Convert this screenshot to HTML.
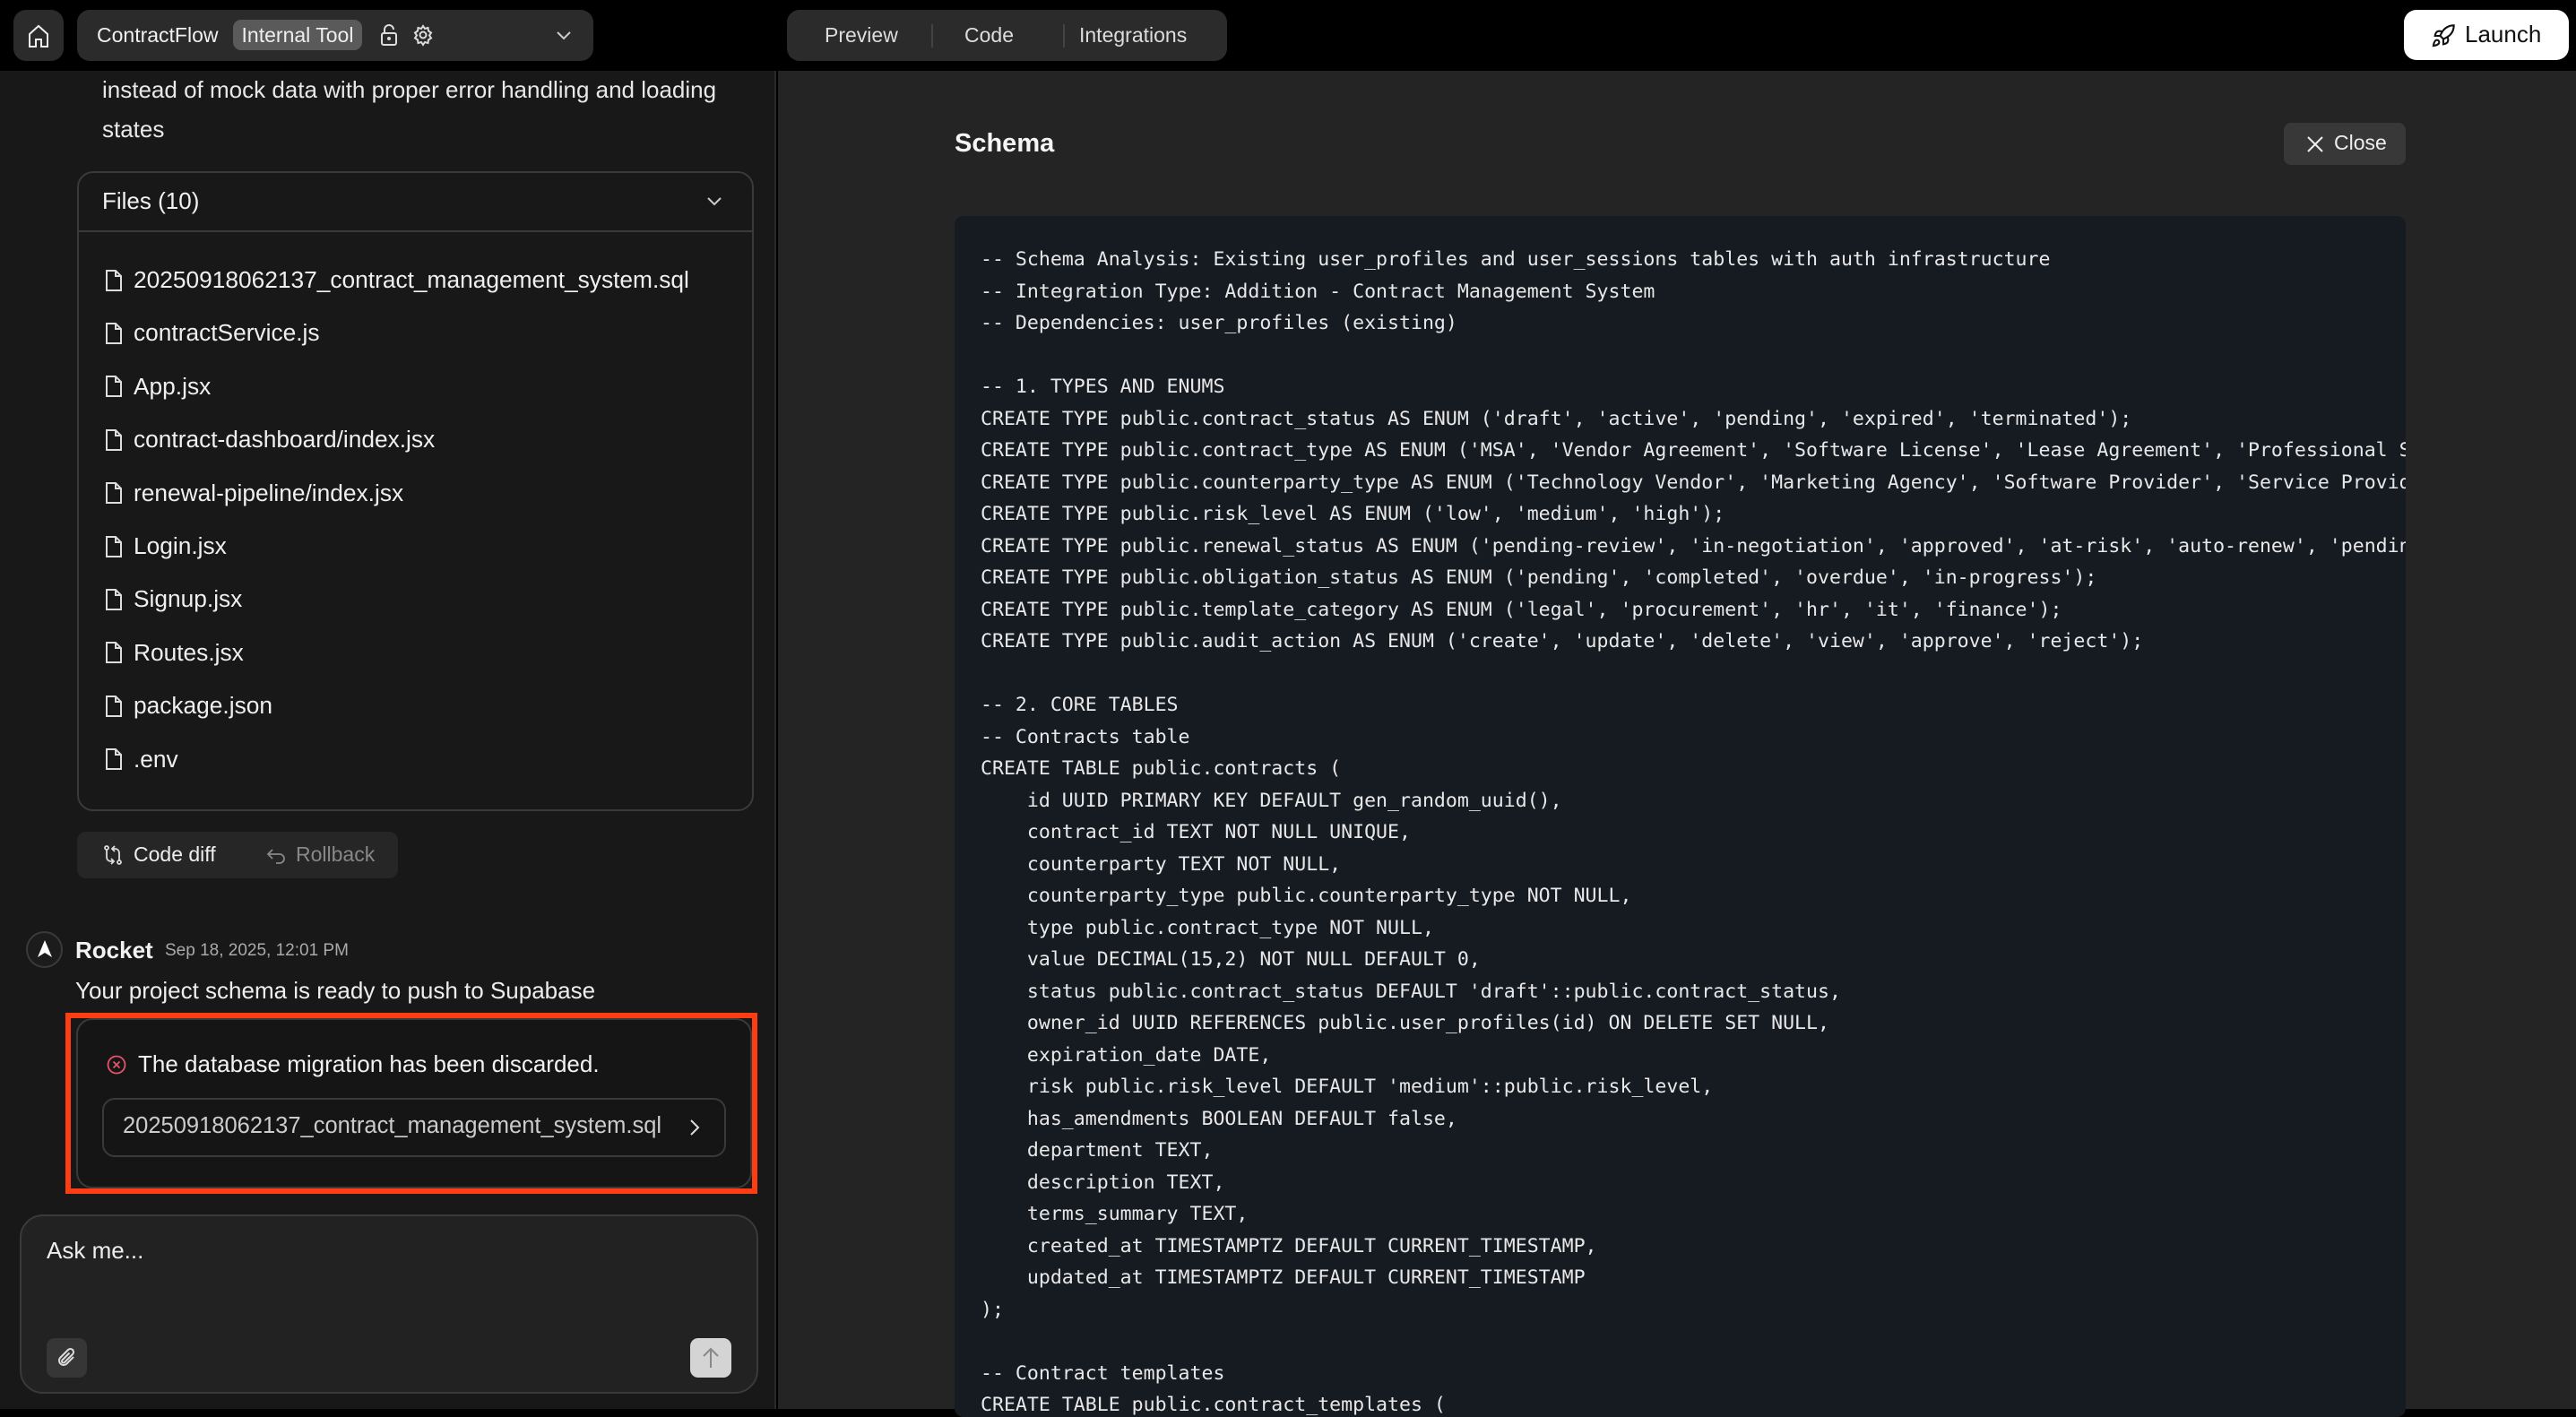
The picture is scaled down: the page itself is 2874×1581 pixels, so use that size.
<!DOCTYPE html>
<html><head><meta charset="utf-8"><style>
*{box-sizing:border-box;margin:0;padding:0}
body{width:2874px;height:1572px;overflow:hidden;background:#000;font-family:"Liberation Sans",sans-serif;color:#f2f2f2;position:relative}
.a{position:absolute}
.top{left:0;top:0;width:2874px;height:79px;background:#000}
.pill{background:#2b2b2b;border-radius:14px}
.left{left:0;top:79px;width:866px;height:1493px;background:#181818;border-right:2px solid #2a2a2a}
.right{left:868px;top:79px;width:2006px;height:1493px;background:#242424}
.file{left:117px;font-size:26.3px;color:#f0f0f0;display:flex;align-items:center;gap:12px}
pre{font-family:"DejaVu Sans Mono","Liberation Mono",monospace;font-size:21.55px;line-height:35.5px;color:#e8e8e8;white-space:pre}
</style></head><body>
<div class="a top"></div>
<div class="a pill" style="left:15px;top:11px;width:56px;height:57px;border-radius:14px">
<svg class="a" style="left:15px;top:15px" width="26" height="28" viewBox="0 0 26 28" fill="none" stroke="#eee" stroke-width="2"><path d="M3 12 L13 3 L23 12 V26 H16 V18 H10 V26 H3 Z"/></svg></div>
<div class="a pill" style="left:86px;top:11px;width:576px;height:57px"></div>
<div class="a" style="left:108px;top:26px;font-size:23px;color:#f0f0f0">ContractFlow</div>
<div class="a" style="left:260px;top:22px;width:144px;height:34px;background:#5a5a5a;border-radius:9px;font-size:23px;color:#eee;text-align:center;line-height:34px">Internal Tool</div>
<svg class="a" style="left:424px;top:26px" width="20" height="26" viewBox="0 0 20 26" fill="none" stroke="#ddd" stroke-width="2"><rect x="2" y="11" width="16" height="13" rx="2"/><path d="M5 11V7a5 5 0 0 1 10 0"/><circle cx="10" cy="17" r="1" fill="#ddd"/></svg>
<svg class="a" style="left:460px;top:26px" width="24" height="26" viewBox="0 0 24 24" fill="none" stroke="#ddd" stroke-width="2"><circle cx="12" cy="12" r="3.5"/><path d="M12 2l2 3 3.5-1 .5 3.5 3 2-2 3 2 3-3 2-.5 3.5-3.5-1-2 3-2-3-3.5 1-.5-3.5-3-2 2-3-2-3 3-2 .5-3.5 3.5 1z"/></svg>
<svg class="a" style="left:620px;top:34px" width="18" height="12" viewBox="0 0 18 12" fill="none" stroke="#ccc" stroke-width="2"><path d="M2 2l7 7 7-7"/></svg>
<div class="a pill" style="left:878px;top:11px;width:491px;height:57px"></div>
<div class="a" style="left:920px;top:26px;font-size:23px;color:#ddd">Preview</div>
<div class="a" style="left:1039px;top:27px;width:2px;height:26px;background:#444"></div>
<div class="a" style="left:1076px;top:26px;font-size:23px;color:#ddd">Code</div>
<div class="a" style="left:1186px;top:27px;width:2px;height:26px;background:#444"></div>
<div class="a" style="left:1204px;top:26px;font-size:23px;color:#ddd">Integrations</div>
<div class="a" style="left:2682px;top:11px;width:184px;height:56px;background:#fff;border-radius:14px"></div>
<svg class="a" style="left:2712px;top:26px" width="28" height="28" viewBox="0 0 24 24" fill="none" stroke="#111" stroke-width="1.8"><path d="M4.5 16.5c-1.5 1.3-2 5-2 5s3.7-.5 5-2c.7-.8.7-2.1-.1-2.9a2.2 2.2 0 0 0-2.9-.1z"/><path d="M12 15l-3-3a22 22 0 0 1 2-4A12.9 12.9 0 0 1 22 2c0 2.7-.8 7.5-6 11a22 22 0 0 1-4 2z"/><path d="M9 12H4s.5-3 2-4c1.6-1.1 5 0 5 0M12 15v5s3-.5 4-2c1.1-1.6 0-5 0-5"/></svg>
<div class="a" style="left:2750px;top:23px;font-size:26px;color:#111">Launch</div>

<div class="a left"></div>
<div class="a" style="left:114px;top:78px;font-size:26px;line-height:44px;color:#e8e8e8;width:740px">instead of mock data with proper error handling and loading<br>states</div>
<div class="a" style="left:86px;top:191px;width:755px;height:714px;border:2px solid #3a3a3a;border-radius:18px"></div>
<div class="a" style="left:86px;top:257px;width:755px;height:2px;background:#3a3a3a"></div>
<div class="a" style="left:114px;top:209px;font-size:26px">Files (10)</div>
<svg class="a" style="left:788px;top:219px" width="18" height="12" viewBox="0 0 18 12" fill="none" stroke="#ccc" stroke-width="2"><path d="M2 2l7 7 7-7"/></svg>
<div id="files"></div>
<div class="a" style="left:86px;top:928px;width:358px;height:52px;background:#262626;border-radius:10px"></div>
<svg class="a" style="left:114px;top:942px" width="24" height="24" viewBox="0 0 24 24" fill="none" stroke="#ddd" stroke-width="1.8"><circle cx="5" cy="4" r="2"/><circle cx="19" cy="20" r="2"/><path d="M5 6v8c0 3 2 5 5 5h2M19 18v-8c0-3-2-5-5-5h-2M10 16l3 3-3 3M14 2l-3 3 3 3"/></svg>
<div class="a" style="left:149px;top:940px;font-size:23px;color:#eee">Code diff</div>
<svg class="a" style="left:296px;top:944px" width="24" height="22" viewBox="0 0 24 22" fill="none" stroke="#888" stroke-width="1.8"><path d="M8 4L3 9l5 5M3 9h13a5 5 0 0 1 0 10h-4"/></svg>
<div class="a" style="left:330px;top:940px;font-size:23px;color:#888">Rollback</div>

<div class="a" style="left:29px;top:1039px;width:41px;height:41px;border:2px solid #3a3a3a;border-radius:50%;background:#1c1c1c"></div>
<svg class="a" style="left:38px;top:1047px" width="24" height="24" viewBox="0 0 24 24"><path d="M12 2 L20 21 L12 16 L4 21 Z" fill="#fff"/></svg>
<div class="a" style="left:84px;top:1045px;font-size:26px;font-weight:bold">Rocket</div>
<div class="a" style="left:184px;top:1050px;font-size:19px;color:#aaa">Sep 18, 2025, 12:01 PM</div>
<div class="a" style="left:84px;top:1090px;font-size:26px;color:#eee">Your project schema is ready to push to Supabase</div>
<div class="a" style="left:73px;top:1130px;width:772px;height:202px;border:6px solid #ff3d12"></div>
<div class="a" style="left:85px;top:1136px;width:754px;height:190px;border:2px solid #3a3a3a;border-radius:18px;background:#151515"></div>
<svg class="a" style="left:118px;top:1176px" width="24" height="24" viewBox="0 0 24 24" fill="none" stroke="#e0556a" stroke-width="1.8"><circle cx="12" cy="12" r="9.5"/><path d="M8.5 8.5l7 7M15.5 8.5l-7 7"/></svg>
<div class="a" style="left:154px;top:1172px;font-size:26px;color:#f2f2f2">The database migration has been discarded.</div>
<div class="a" style="left:114px;top:1225px;width:696px;height:66px;border:2px solid #3a3a3a;border-radius:14px"></div>
<div class="a" style="left:137px;top:1242px;font-size:25.5px;color:#ccc">20250918062137_contract_management_system.sql</div>
<svg class="a" style="left:768px;top:1248px" width="14" height="20" viewBox="0 0 14 20" fill="none" stroke="#ddd" stroke-width="2"><path d="M3 2l8 8-8 8"/></svg>
<div class="a" style="left:22px;top:1355px;width:824px;height:200px;border:2px solid #3a3a3a;border-radius:26px;background:#222"></div>
<div class="a" style="left:52px;top:1380px;font-size:26px;color:#eee">Ask me...</div>
<div class="a" style="left:52px;top:1493px;width:45px;height:44px;border-radius:9px;background:#363636"></div>
<svg class="a" style="left:62px;top:1503px" width="24" height="24" viewBox="0 0 24 24" fill="none" stroke="#ddd" stroke-width="2"><path d="M20 11l-8 8a5 5 0 0 1-7-7l9-9a3.3 3.3 0 0 1 5 5l-9 9a1.7 1.7 0 0 1-2.5-2.5l8-8"/></svg>
<div class="a" style="left:770px;top:1493px;width:46px;height:44px;border-radius:9px;background:#d4d4d4"></div>
<svg class="a" style="left:782px;top:1502px" width="22" height="26" viewBox="0 0 22 26" fill="none" stroke="#888" stroke-width="2"><path d="M11 24V3M3 11l8-8 8 8"/></svg>

<div class="a right"></div>
<div class="a" style="left:1065px;top:144px;font-size:29px;font-weight:bold;color:#f5f5f5">Schema</div>
<div class="a" style="left:2548px;top:137px;width:136px;height:47px;background:#383838;border-radius:8px"></div>
<svg class="a" style="left:2572px;top:150px" width="22" height="22" viewBox="0 0 22 22" fill="none" stroke="#eee" stroke-width="2"><path d="M3 3l16 16M19 3L3 19"/></svg>
<div class="a" style="left:2604px;top:146px;font-size:23px;color:#eee">Close</div>
<div class="a" style="left:1065px;top:241px;width:1619px;height:1340px;background:#161a21;border-radius:10px;overflow:hidden">
<pre class="a" style="left:29px;top:31px">-- Schema Analysis: Existing user_profiles and user_sessions tables with auth infrastructure
-- Integration Type: Addition - Contract Management System
-- Dependencies: user_profiles (existing)

-- 1. TYPES AND ENUMS
CREATE TYPE public.contract_status AS ENUM ('draft', 'active', 'pending', 'expired', 'terminated');
CREATE TYPE public.contract_type AS ENUM ('MSA', 'Vendor Agreement', 'Software License', 'Lease Agreement', 'Professional Services');
CREATE TYPE public.counterparty_type AS ENUM ('Technology Vendor', 'Marketing Agency', 'Software Provider', 'Service Provider');
CREATE TYPE public.risk_level AS ENUM ('low', 'medium', 'high');
CREATE TYPE public.renewal_status AS ENUM ('pending-review', 'in-negotiation', 'approved', 'at-risk', 'auto-renew', 'pending');
CREATE TYPE public.obligation_status AS ENUM ('pending', 'completed', 'overdue', 'in-progress');
CREATE TYPE public.template_category AS ENUM ('legal', 'procurement', 'hr', 'it', 'finance');
CREATE TYPE public.audit_action AS ENUM ('create', 'update', 'delete', 'view', 'approve', 'reject');

-- 2. CORE TABLES
-- Contracts table
CREATE TABLE public.contracts (
    id UUID PRIMARY KEY DEFAULT gen_random_uuid(),
    contract_id TEXT NOT NULL UNIQUE,
    counterparty TEXT NOT NULL,
    counterparty_type public.counterparty_type NOT NULL,
    type public.contract_type NOT NULL,
    value DECIMAL(15,2) NOT NULL DEFAULT 0,
    status public.contract_status DEFAULT 'draft'::public.contract_status,
    owner_id UUID REFERENCES public.user_profiles(id) ON DELETE SET NULL,
    expiration_date DATE,
    risk public.risk_level DEFAULT 'medium'::public.risk_level,
    has_amendments BOOLEAN DEFAULT false,
    department TEXT,
    description TEXT,
    terms_summary TEXT,
    created_at TIMESTAMPTZ DEFAULT CURRENT_TIMESTAMP,
    updated_at TIMESTAMPTZ DEFAULT CURRENT_TIMESTAMP
);

-- Contract templates
CREATE TABLE public.contract_templates (</pre>
</div>
<script>
var f=["20250918062137_contract_management_system.sql","contractService.js","App.jsx","contract-dashboard/index.jsx","renewal-pipeline/index.jsx","Login.jsx","Signup.jsx","Routes.jsx","package.json",".env"];
var h="";
f.forEach(function(n,i){var y=297+i*59.4;h+='<div class="a file" style="top:'+y+'px"><svg width="20" height="26" viewBox="0 0 20 26" fill="none" stroke="#ddd" stroke-width="2"><path d="M2 2h10l6 6v16H2z M12 2v6h6"/></svg><span>'+n+'</span></div>';});
document.getElementById("files").outerHTML=h;
</script>
</body></html>
